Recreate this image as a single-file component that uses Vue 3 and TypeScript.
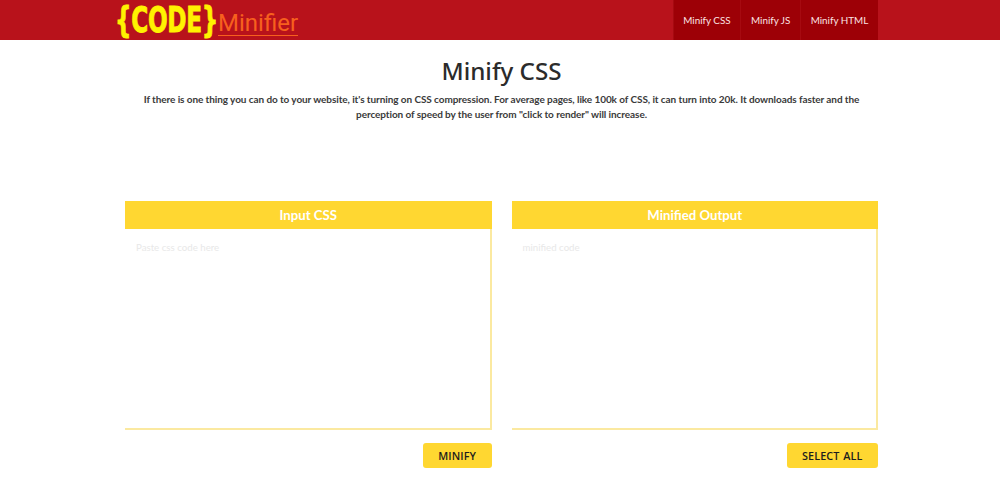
<script setup lang="ts">
const navItems: string[] = ['Minify CSS', 'Minify JS', 'Minify HTML']
const panels = [
  { title: 'Input CSS', placeholder: 'Paste css code here', action: 'MINIFY' },
  { title: 'Minified Output', placeholder: 'minified code', action: 'SELECT ALL' },
]
</script>

<template>
  <div class="page">
    <header class="topbar">
      <div class="bar-inner">
        <div class="logo">
          <span class="logo-code">{CODE}</span>
          <span class="logo-name">Minifier</span>
        </div>
        <nav class="nav">
          <a v-for="item in navItems" :key="item" class="nav-item">{{ item }}</a>
        </nav>
      </div>
    </header>
    <main class="content">
      <h1 class="title">Minify CSS</h1>
      <p class="intro">If there is one thing you can do to your website, it's turning on CSS compression. For average pages, like 100k of CSS, it can turn into 20k. It downloads faster and the perception of speed by the user from "click to render" will increase.</p>
      <div class="panels">
        <section v-for="panel in panels" :key="panel.title" class="panel">
          <div class="panel-head">{{ panel.title }}</div>
          <div class="panel-body">{{ panel.placeholder }}</div>
          <div class="panel-foot">
            <button class="action" type="button">{{ panel.action }}</button>
          </div>
        </section>
      </div>
    </main>
  </div>
</template>

<style>
html, body { margin: 0; background: #fff; }
</style>

<style scoped>
.page { width: 1000px; height: 500px; overflow: hidden; background: #fff; font-family: Lato, "Liberation Sans", sans-serif; }
.topbar { height: 40px; background: #b8121b; }
.bar-inner { width: 753px; height: 40px; margin-left: 125px; display: flex; justify-content: space-between; }
.logo { display: flex; align-items: flex-start; margin-left: -10px; }
.logo-code { display: inline-block; width: 103px; height: 40px; font-family: "DejaVu Sans", sans-serif; font-weight: 700; font-size: 36px; line-height: 40px; color: #fff200; -webkit-text-stroke: 0.9px #fff200; transform: scaleX(0.645); transform-origin: left top; white-space: nowrap; letter-spacing: -0.5px; }
.logo-name { display: inline-block; width: 80px; height: 27px; margin-top: 8px; border-bottom: 1.5px solid #f7601e; font-family: Roboto, sans-serif; font-weight: 400; font-size: 24px; line-height: 30px; color: #f7601e; box-sizing: content-box; white-space: nowrap; }
.nav { display: flex; height: 40px; background: #9d0006; }
.nav-item { display: flex; align-items: center; height: 40px; padding: 0 9.7px; font-size: 9.85px; color: #fbe3e3; border-left: 1px solid #a60a10; box-sizing: border-box; }
.content { width: 753px; margin-left: 125px; }
.title { margin: 0; padding-top: 15px; text-align: center; font-family: "Noto Sans", sans-serif; font-weight: 500; font-size: 24.2px; line-height: 32px; color: #2b2b2b; }
.intro { width: 725px; margin: 5px auto 0; text-align: center; font-family: Lato, sans-serif; font-weight: 700; font-size: 10px; letter-spacing: -0.08px; line-height: 15px; color: #3a3a3a; }
.panels { display: flex; gap: 20px; margin-top: 79px; }
.panel { flex: 1; }
.panel-head { height: 28px; line-height: 29px; background: #ffd731; color: #fff; text-align: center; font-weight: 700; font-size: 13.2px; }
.panel-body { box-sizing: content-box; padding: 12px 11px 0; height: 187px; border-right: 2px solid #fbe9a0; border-bottom: 2px solid #fbe9a0; font-size: 9.7px; line-height: 13px; color: #e8e8e8; }
.panel-foot { display: flex; justify-content: flex-end; margin-top: 13px; }
.action { height: 25px; padding: 0 15.5px; border: 0; border-radius: 3px; background: #ffd731; color: #1d1d1d; font-family: "Open Sans", sans-serif; font-weight: 600; font-size: 10.8px; word-spacing: 1px; letter-spacing: 0.1px; }
</style>
